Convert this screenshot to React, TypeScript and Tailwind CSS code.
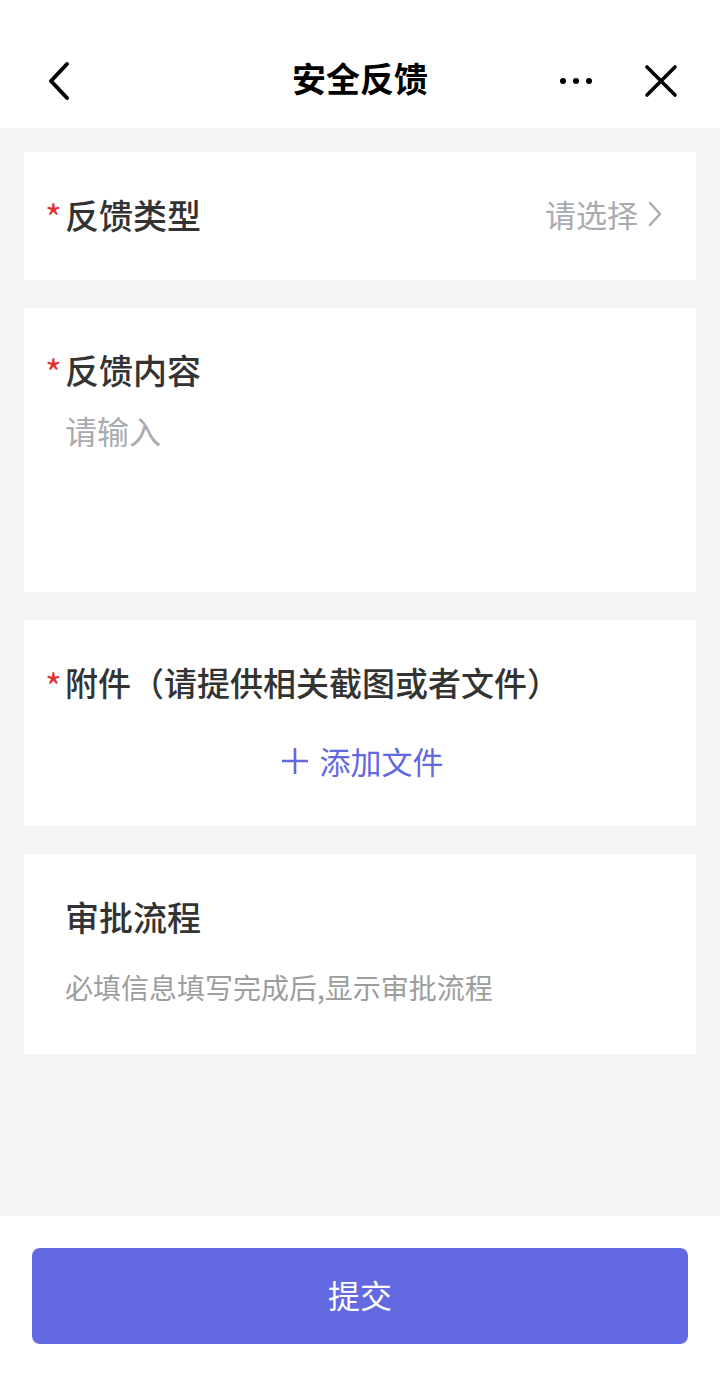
const font = "font-['PingFang_SC','Noto_Sans_CJK_SC',sans-serif]"

function Required() {
  return <span className="w-[18px] h-[44px] text-[36px] leading-[44px] text-[#e0322f] text-left pt-[2px] -ml-[2px] mr-[2px]">*</span>
}

export default function App() {
  return (
    <div className={`${font} w-[720px] h-[1376px] bg-[#f4f5f7] flex flex-col`}>
      {/* 顶部导航 */}
      <header className="h-[128px] bg-white flex items-center px-[40px] pt-[34px] relative">
        <svg width="36" height="40" viewBox="0 0 36 40" className="ml-[3px]">
          <path d="M24 3 L8 20 L24 37" fill="none" stroke="#000" strokeWidth="4" strokeLinecap="round" strokeLinejoin="round" />
        </svg>
        <h1 className="absolute left-0 right-0 top-[26px] bottom-0 flex items-center justify-center text-[34px] font-bold text-black">
          安全反馈
        </h1>
        <div className="ml-auto flex items-center gap-[52px]">
          <div className="flex gap-[7px]">
            <span className="w-[6px] h-[6px] rounded-full bg-black" />
            <span className="w-[6px] h-[6px] rounded-full bg-black" />
            <span className="w-[6px] h-[6px] rounded-full bg-black" />
          </div>
          <svg width="34" height="34" viewBox="0 0 34 34" className="mr-[2px]">
            <path d="M3 3 L31 31 M31 3 L3 31" stroke="#000" strokeWidth="3.6" strokeLinecap="round" />
          </svg>
        </div>
      </header>

      <main className="flex-1 flex flex-col gap-[28px] px-[24px] pt-[24px]">
        {/* 反馈类型 */}
        <section className="h-[128px] bg-white flex items-center pl-[23px] pr-[32px] pb-[4px]">
          <Required />
          <span className="text-[34px] text-[#333] font-medium">反馈类型</span>
          <span className="ml-auto text-[31px] text-[#a9abb1]">请选择</span>
          <svg width="18" height="30" viewBox="0 0 18 30" className="ml-[8px]">
            <path d="M4 4 L14 15 L4 26" fill="none" stroke="#a9abb1" strokeWidth="2.4" strokeLinecap="round" strokeLinejoin="round" />
          </svg>
        </section>

        {/* 反馈内容 */}
        <section className="h-[284px] bg-white pl-[23px] pr-[32px] pt-[39px]">
          <div className="flex items-center h-[44px]">
            <Required />
            <span className="text-[34px] text-[#333] font-medium">反馈内容</span>
          </div>
          <div className="pl-[18px] mt-[15px] text-[32px] text-[#a9abb1]">请输入</div>
        </section>

        {/* 附件 */}
        <section className="h-[206px] bg-white pl-[23px] pr-[32px] pt-[41px]">
          <div className="flex items-center h-[44px]">
            <Required />
            <span className="text-[33px] text-[#333] font-medium">附件（请提供相关截图或者文件）</span>
          </div>
          <div className="flex items-center justify-center mt-[33px] text-[#6168e0] text-[31px] gap-[12px] pl-[14px]">
            <svg width="26" height="26" viewBox="0 0 26 26">
              <path d="M13 0 V26 M0 13 H26" stroke="#6168e0" strokeWidth="2.6" />
            </svg>
            <span>添加文件</span>
          </div>
        </section>

        {/* 审批流程 */}
        <section className="h-[200px] bg-white pl-[41px] pr-[32px] pt-[40px]">
          <div className="h-[44px] flex items-center text-[34px] text-[#333] font-medium">审批流程</div>
          <div className="mt-[28px] text-[28px] text-[#9d9d9d]">必填信息填写完成后,显示审批流程</div>
        </section>
      </main>

      {/* 底部按钮 */}
      <footer className="h-[160px] bg-white px-[32px] pt-[32px]">
        <button className="w-full h-[96px] rounded-[8px] bg-[#6369e0] text-white text-[32px] pb-[4px]">提交</button>
      </footer>
    </div>
  )
}
